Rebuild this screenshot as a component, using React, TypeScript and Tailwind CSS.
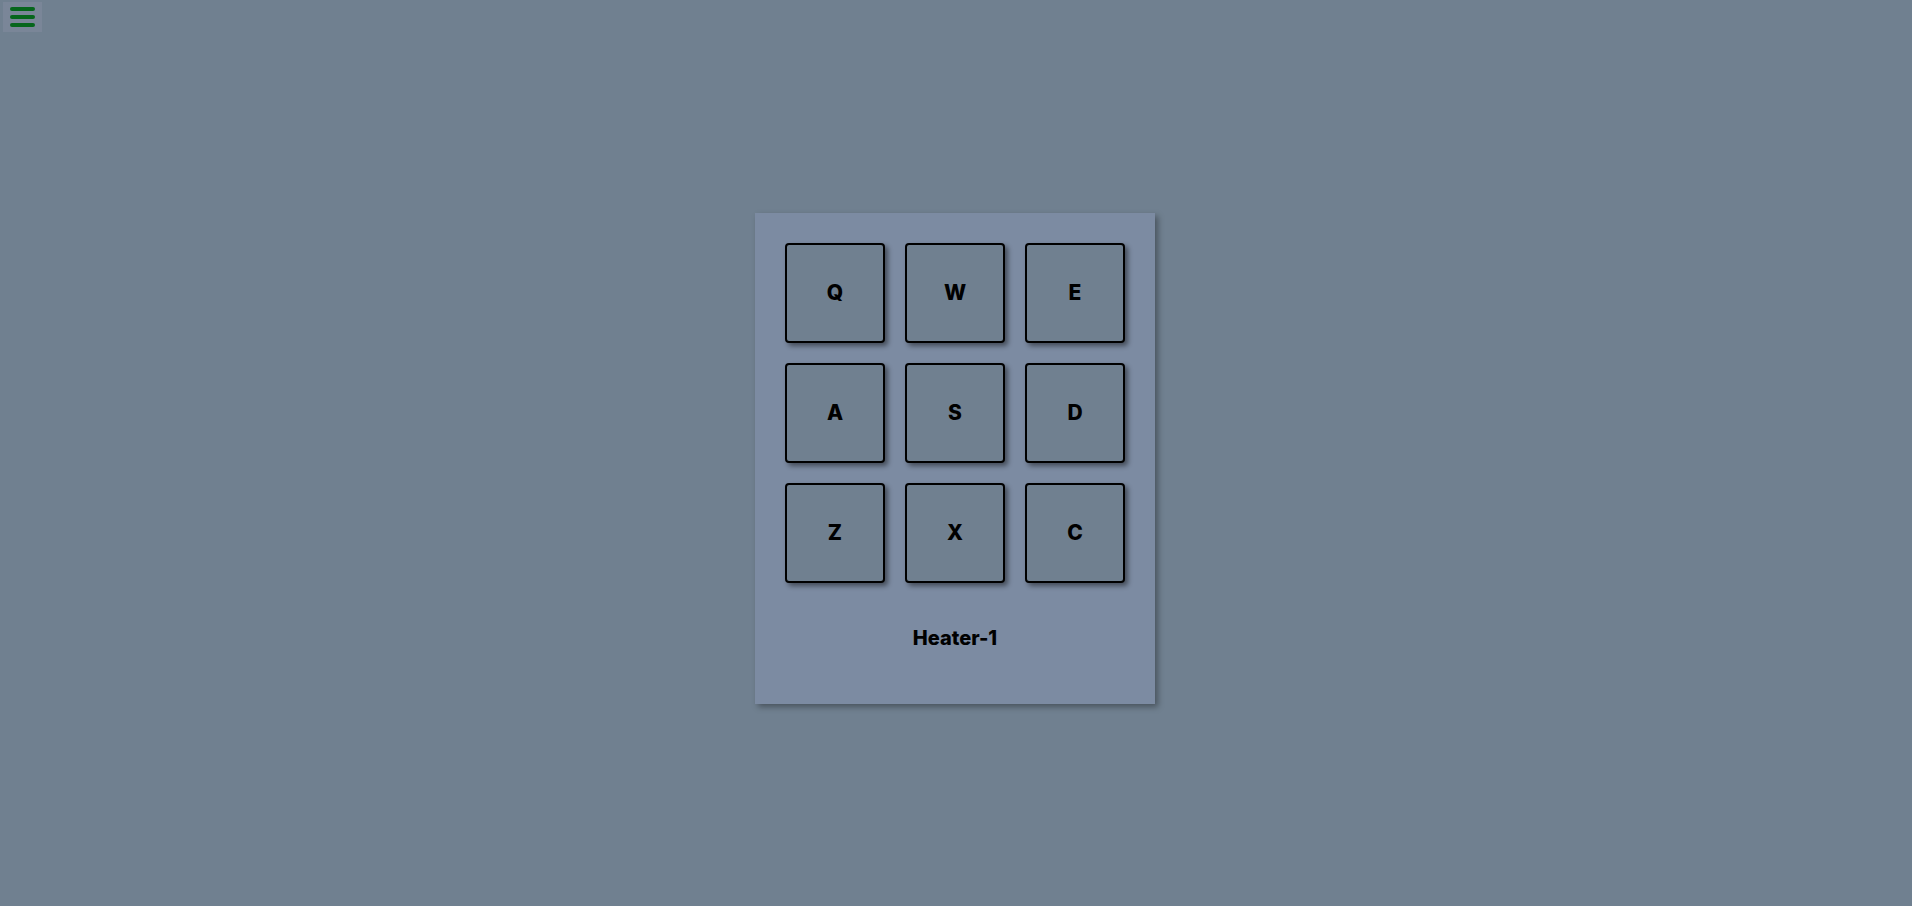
import React from "react";

const keys = ["Q", "W", "E", "A", "S", "D", "Z", "X", "C"];

export default function App() {
  return (
    <div
      className="relative min-h-screen bg-[#708090] text-black"
      style={{ fontFamily: "Inter, 'Noto Sans', sans-serif" }}
    >
      {/* menu toggle */}
      <button className="absolute left-[3px] top-[2px] w-[39px] h-[30px] bg-[#7a8698] flex flex-col items-center justify-center gap-[4px]">
        <span className="block w-[25px] h-[4px] rounded-full bg-[#06661c]" />
        <span className="block w-[25px] h-[4px] rounded-full bg-[#06661c]" />
        <span className="block w-[25px] h-[4px] rounded-full bg-[#06661c]" />
      </button>

      <div className="pt-[213px] pr-[2px] flex justify-center">
        <div className="w-[400px] h-[491px] bg-[#7c8ba2] p-[30px] shadow-[3px_3px_6px_rgba(0,0,0,0.35)] flex flex-col items-center">
          <div className="grid grid-cols-3 gap-[20px]">
            {keys.map((k) => (
              <div
                key={k}
                className="w-[100px] h-[100px] flex items-center justify-center bg-[#708090] border-2 border-black rounded-[4px] shadow-[3px_3px_5px_rgba(0,0,0,0.45)] text-[21px] font-extrabold"
              >
                {k}
              </div>
            ))}
          </div>
          <div className="mt-[40px] h-[30px] leading-[30px] text-[20px] font-extrabold">
            Heater-1
          </div>
        </div>
      </div>
    </div>
  );
}
